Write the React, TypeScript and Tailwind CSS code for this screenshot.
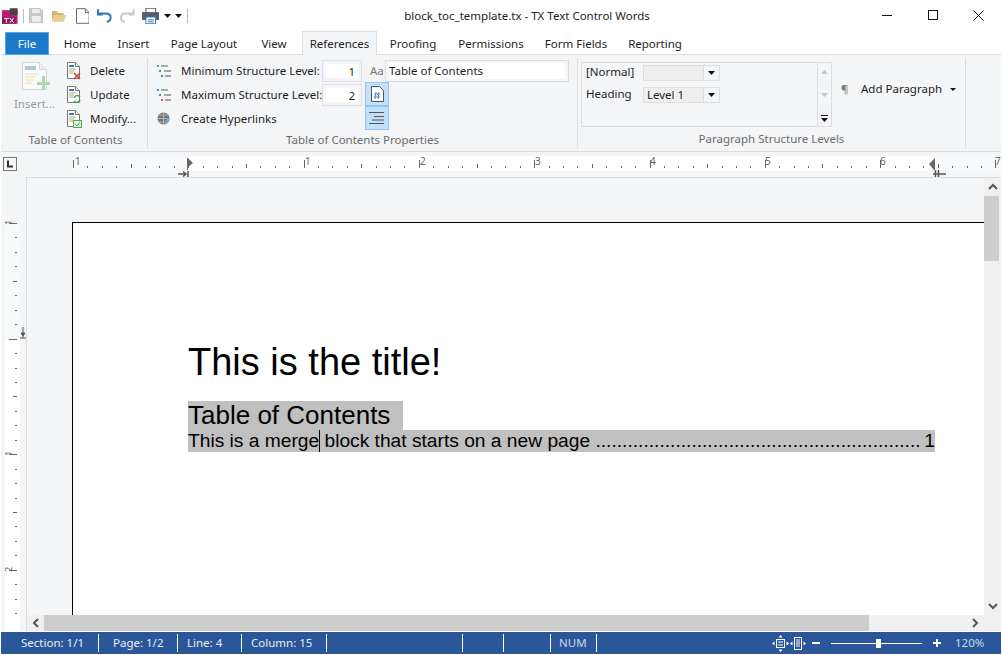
import React from "react";

const tabs = [
  { label: "Home", w: "w-[62px]" },
  { label: "Insert", w: "w-[45px]" },
  { label: "Page Layout", w: "w-[96px]" },
  { label: "View", w: "w-[44px]" },
];
const tabsAfter = [
  { label: "Proofing", w: "w-[72px]" },
  { label: "Permissions", w: "w-[84px]" },
  { label: "Form Fields", w: "w-[86px]" },
  { label: "Reporting", w: "w-[72px]" },
];

function DocBase({ children }: { children?: React.ReactNode }) {
  return (
    <svg width="16" height="18" viewBox="0 0 16 18" className="shrink-0">
      <path d="M1.5.5h8l4 4v12h-12z" fill="#fff" stroke="#777" />
      <path d="M9.5.5v4h4" fill="#eee" stroke="#777" />
      <rect x="3" y="3" width="5" height="2" fill="#3b78b8" />
      <path d="M3 7h7M3 9h5M3 11h4" stroke="#b9a67a" />
      {children}
    </svg>
  );
}

function LevelIcon({ colors }: { colors: string[] }) {
  return (
    <svg width="14" height="14" viewBox="0 0 14 14" className="shrink-0">
      <rect x="0" y="1" width="2" height="2" fill={colors[0]} />
      <path d="M4 2h7" stroke="#3c7a4c" />
      <rect x="2" y="6" width="2" height="2" fill={colors[1]} />
      <path d="M7 7h7" stroke="#555" />
      <rect x="4" y="11" width="2" height="2" fill={colors[2]} />
      <path d="M8 12h6" stroke="#555" />
    </svg>
  );
}

function Caret() {
  return (
    <svg width="7" height="4" viewBox="0 0 7 4" className="shrink-0">
      <path d="M0 0h7L3.5 4z" fill="#111" />
    </svg>
  );
}

function SmallAction({ label, icon }: { label: string; icon: React.ReactNode }) {
  return (
    <div className="flex h-6 items-center">
      {icon}
      <span className="ml-[8px] text-[#1e1e1e]">{label}</span>
    </div>
  );
}

function SpinBox({ value }: { value: string }) {
  return (
    <div className="h-[22px] w-[40px] border border-[#dcddee] bg-[#f4f5f7] p-[3px]">
      <div className="h-full bg-white pr-[3px] text-right leading-[15px] text-[#1e1e1e]">{value}</div>
    </div>
  );
}

function Combo({ value }: { value?: string }) {
  return (
    <div className="flex h-[16px] w-[77px] border border-[#dcdddf] bg-[#eeeeee]">
      <div className="flex-1 pl-[3px] leading-[14px] text-[#1e1e1e]">{value}</div>
      <div className="flex w-[16px] items-center justify-center border-l border-[#dcdddf] bg-[#f4f5f7]">
        <Caret />
      </div>
    </div>
  );
}

function HRuler() {
  const ticks: React.ReactNode[] = [];
  const unit = 115.3;
  for (let i = 0; i <= 64; i++) {
    const x = Math.round(73 + (unit / 8) * i);
    if (x > 1000) break;
    if (i % 8 === 0) ticks.push(<rect key={i} x={x} y={8} width={1} height={8} fill="#666" />);
    else if (i % 4 === 0) ticks.push(<rect key={i} x={x} y={12} width={1} height={4} fill="#666" />);
    else ticks.push(<rect key={i} x={x} y={14} width={1} height={2} fill="#666" />);
  }
  const nums = [
    [75, "1"],
    [305, "1"],
    [420, "2"],
    [535, "3"],
    [650, "4"],
    [765, "5"],
    [880, "6"],
    [995, "7"],
  ] as const;
  return (
    <svg width="1000" height="25" viewBox="1 0 1000 25" className="block">
      <rect x="73" y="4" width="115" height="15" fill="#f8f9fa" />
      <rect x="188" y="4" width="747" height="15" fill="#fff" />
      <rect x="935" y="4" width="67" height="15" fill="#f8f9fa" />
      <rect x="3.5" y="5.5" width="13" height="13" fill="#f4f5f7" stroke="#777" />
      <path d="M8 8.5v6h5" fill="none" stroke="#333" strokeWidth="2" />
      {ticks}
      {nums.map(([x, n], i) => (
        <text key={i} x={x} y={13} fontSize="10" fill="#666" fontFamily="Noto Sans, sans-serif">
          {n}
        </text>
      ))}
      <path d="M188 6l5 5-5 4v3h-1V6z" fill="#666" />
      <path d="M178 22h8M183 19.500l3 2.500-3 2.500M188 19v6" fill="none" stroke="#555" strokeWidth="1.500" />
      <path d="M935 6v12h-1l-5-6z" fill="#666" />
      <path d="M933 22h13M935.500 18v7M938.500 18v7" fill="none" stroke="#555" strokeWidth="1.500" />
    </svg>
  );
}

function VRuler() {
  const ticks: React.ReactNode[] = [];
  const top = 46;
  for (let i = 0; i <= 32; i++) {
    const y = Math.round(top + (115.6 / 8) * i);
    if (y > 450) break;
    if (i % 8 === 0) ticks.push(<rect key={i} x={9} y={y} width={8} height={1} fill="#666" />);
    else if (i % 4 === 0) ticks.push(<rect key={i} x={13} y={y} width={4} height={1} fill="#666" />);
    else ticks.push(<rect key={i} x={15} y={y} width={2} height={1} fill="#666" />);
  }
  return (
    <svg width="25" height="454" viewBox="1 0 25 454" className="block">
      <rect x="5" y="46" width="15" height="115" fill="#f8f9fa" />
      <rect x="5" y="161" width="15" height="293" fill="#fff" />
      {ticks}
      {[
        [48, "1"],
        [279, "1"],
        [395, "2"],
      ].map(([y, n]) => (
        <text
          key={y}
          x={0}
          y={0}
          transform={`translate(12 ${y}) rotate(-90)`}
          fontSize="9"
          fill="#666"
          fontFamily="Noto Sans, sans-serif"
        >
          {n}
        </text>
      ))}
      <path d="M23 150v11M20 161h6M21 156h4l-2 3z" fill="#555" stroke="#555" />
    </svg>
  );
}

function Arrow({ d }: { d: string }) {
  return (
    <svg width="10" height="10" viewBox="0 0 10 10">
      <path d={d} fill="none" stroke="#555" strokeWidth="2" />
    </svg>
  );
}

function Sep({ w }: { w: string }) {
  return (
    <div className={`flex h-full items-center justify-end ${w}`}>
      <div className="h-[18px] w-px bg-white" />
    </div>
  );
}

export default function App() {
  return (
    <div className="flex h-[655px] w-[1002px] flex-col overflow-hidden border-x border-b border-white bg-white font-['Noto_Sans','Open_Sans',sans-serif] text-[11.5px] whitespace-nowrap">
      {/* title bar */}
      <div className="flex h-[31px] shrink-0 items-center">
        <div className="flex w-[187px] items-center">
          <svg width="16" height="16" viewBox="0 0 16 16" className="ml-[1px]">
            <rect y="2" width="16" height="14" fill="#c2187a" />
            <rect x="8" width="8" height="7" fill="#444" />
            <rect x="0" y="9" width="14" height="7" fill="#8b1a5c" />
            <path d="M2 10.500h5M4.500 10.500V15M8 10l4 5M12 10l-4 5" stroke="#fff" />
          </svg>
          <div className="ml-[5px] h-[14px] w-px bg-[#bbb]" />
          <svg width="15" height="15" viewBox="0 0 15 15" className="ml-[5px]">
            <path d="M.5.5h11l3 3v11H.5z" fill="#c9c9c9" stroke="#bbb" />
            <rect x="3" y="1" width="8" height="4" fill="#eee" />
            <rect x="3" y="8" width="9" height="6" fill="#eee" />
          </svg>
          <svg width="15" height="13" viewBox="0 0 15 13" className="ml-[9px]">
            <path d="M0 2h5l1 2h6v2H3l-3 6z" fill="#d6b676" />
            <path d="M3 6h12l-3 7H0z" fill="#eccb8e" />
          </svg>
          <svg width="14" height="16" viewBox="0 0 14 16" className="ml-[9px]">
            <path d="M.5.5h9l4 4v11H.5z" fill="#fff" stroke="#666" />
            <path d="M9.500.5v4h4" fill="none" stroke="#666" />
          </svg>
          <svg width="15" height="15" viewBox="0 0 15 15" className="ml-[8px]">
            <path d="M1 5.500h8c7 0 6 8 1 8.500" fill="none" stroke="#2e75b6" strokeWidth="2" />
            <path d="M1 1v5.500h5" fill="none" stroke="#2e75b6" strokeWidth="2" />
          </svg>
          <svg width="15" height="15" viewBox="0 0 15 15" className="ml-[8px]">
            <path d="M14 5.500H6c-7 0-6 8-1 8.500" fill="none" stroke="#c9c9c9" strokeWidth="2" />
            <path d="M14 1v5.500H9" fill="none" stroke="#c9c9c9" strokeWidth="2" />
          </svg>
          <svg width="18" height="16" viewBox="0 0 18 16" className="ml-[7px]">
            <rect x="4" y="0" width="10" height="5" fill="#fff" stroke="#555" />
            <rect x="0" y="4" width="18" height="8" fill="#55606c" />
            <rect x="4" y="9" width="10" height="7" fill="#fff" stroke="#2e75b6" />
            <path d="M6 12h6M6 14h6" stroke="#2e75b6" />
          </svg>
          <div className="ml-[5px] flex items-center gap-[4px]">
            <Caret />
            <Caret />
          </div>
          <div className="ml-[5px] h-[14px] w-px bg-[#bbb]" />
        </div>
        <div className="w-[678px] text-center text-[#1e1e1e]">block_toc_template.tx - TX Text Control Words</div>
        <div className="flex w-[135px] items-center">
          <svg width="11" height="11" viewBox="0 0 11 11" className="ml-[16px]">
            <path d="M0 5.500h10" stroke="#111" />
          </svg>
          <svg width="11" height="11" viewBox="0 0 11 11" className="ml-[34px]">
            <rect x="1.500" y=".5" width="9" height="9" fill="none" stroke="#111" />
          </svg>
          <svg width="11" height="11" viewBox="0 0 11 11" className="ml-[35px]">
            <path d="M.5.5l10 10M10.500.5l-10 10" stroke="#111" />
          </svg>
        </div>
      </div>

      {/* tabs */}
      <div className="flex h-[24px] shrink-0 border-b border-[#dcdddf] pl-[4px]">
        <div className="mt-px h-[23px] w-[44px] border border-[#5fa3dc] bg-[#1979ca] text-center leading-[21px] text-white">
          File
        </div>
        {tabs.map((t) => (
          <div key={t.label} className={`${t.w} pt-[4px] text-center text-[#1e1e1e]`}>
            {t.label}
          </div>
        ))}
        <div className="ml-[6px] h-[24px] w-[75px] border-x border-t border-[#dcdddf] bg-[#f4f5f7] pt-[3px] text-center text-[#1e1e1e]">
          References
        </div>
        {tabsAfter.map((t) => (
          <div key={t.label} className={`${t.w} pt-[4px] text-center text-[#1e1e1e]`}>
            {t.label}
          </div>
        ))}
      </div>

      {/* ribbon */}
      <div className="flex h-[97px] shrink-0 border-b border-[#dcdddf] bg-[#f4f5f7] py-[3px]">
        <div className="flex w-[147px] flex-col border-r border-[#dcdddf]">
          <div className="flex h-[73px] pt-px">
            <div className="w-[65px] pt-[3px]">
              <svg width="28" height="30" viewBox="0 0 28 30" className="ml-[21px]">
                <path d="M.5.5h17l7 7v20H.5z" fill="#fafafa" stroke="#d4d4d4" />
                <path d="M17.500.5v7h7" fill="#eee" stroke="#d4d4d4" />
                <rect x="3" y="4" width="11" height="4" fill="#a9c7e4" />
                <path d="M3 12h14M3 15h11M3 18h9M3 21h7" stroke="#f0dca8" />
                <path d="M20 14h3v6h5v3h-5v5h-3v-5h-5v-3h5z" fill="#a6dcb0" />
              </svg>
              <div className="mt-[3px] pl-[2px] text-center text-[#9a9a9a]">Insert...</div>
            </div>
            <div>
              <SmallAction
                label="Delete"
                icon={
                  <DocBase>
                    <path d="M8 11l6 6M14 11l-6 6" stroke="#d0402f" strokeWidth="1.500" />
                  </DocBase>
                }
              />
              <SmallAction
                label="Update"
                icon={
                  <DocBase>
                    <path d="M8 12c1-3 4-3 6-1M14 14c-1 3-4 3-6 1" fill="none" stroke="#3fa34d" strokeWidth="1.500" />
                  </DocBase>
                }
              />
              <SmallAction
                label="Modify..."
                icon={
                  <DocBase>
                    <rect x="7.500" y="10.500" width="8" height="7" fill="#e8f6ea" stroke="#3fb04f" />
                    <path d="M9 14l2 2 3-4" fill="none" stroke="#3fb04f" />
                  </DocBase>
                }
              />
            </div>
          </div>
          <div className="pl-[3px] text-center leading-[18px] text-[#6b6b6b]">Table of Contents</div>
        </div>

        <div className="flex w-[430px] flex-col border-r border-[#dcdddf]">
          <div className="flex h-[73px] pl-[9px] pt-px">
            <div className="w-[208px]">
              <div className="flex h-6 items-center">
                <LevelIcon colors={["#4aa564", "#4a86c5", "#4a86c5"]} />
                <span className="ml-[10px] w-[141px] text-[#1e1e1e]">Minimum Structure Level:</span>
                <SpinBox value="1" />
              </div>
              <div className="flex h-6 items-center">
                <LevelIcon colors={["#4a86c5", "#4a86c5", "#d0583f"]} />
                <span className="ml-[10px] w-[141px] text-[#1e1e1e]">Maximum Structure Level:</span>
                <SpinBox value="2" />
              </div>
              <div className="flex h-6 items-center">
                <svg width="14" height="14" viewBox="0 0 14 14" className="shrink-0">
                  <circle cx="6.500" cy="6.500" r="6" fill="#777" />
                  <path d="M.5 6.500h12M6.500.5v12M2 3h9M2 10h9" stroke="#ccc" strokeWidth=".7" />
                  <path d="M8 11l4-4" stroke="#6ea4d8" strokeWidth="2.500" />
                </svg>
                <span className="ml-[10px] text-[#1e1e1e]">Create Hyperlinks</span>
              </div>
            </div>
            <div className="w-[204px]">
              <div className="flex h-[23px] items-center">
                <span className="ml-[5px] w-[15px] text-[#777]">Aa</span>
                <div className="h-[22px] w-[184px] border border-[#dcdddf] bg-[#f4f5f7] px-[3px] py-[2px]">
                  <div className="h-full bg-white leading-[16px] text-[#1e1e1e]">Table of Contents</div>
                </div>
              </div>
              <div className="flex h-[24px] w-[24px] items-center justify-center border border-[#90c5f5] bg-[#c3e0fa]">
                <svg width="13" height="16" viewBox="0 0 13 16">
                  <path d="M.5.5h8l4 4v11H.5z" fill="#fff" stroke="#555" />
                  <path d="M5 6l-1 7M8 6l-1 7M3 8h6M3 11h6" stroke="#2e75b6" strokeWidth=".8" />
                </svg>
              </div>
              <div className="flex h-[24px] w-[24px] items-center justify-center border border-[#90c5f5] bg-[#c3e0fa]">
                <svg width="16" height="12" viewBox="0 0 16 12">
                  <path d="M0 .5h15M5 4.500h10M3 8h12M0 11.500h15" stroke="#555" />
                </svg>
              </div>
            </div>
          </div>
          <div className="text-center leading-[18px] text-[#6b6b6b]">Table of Contents Properties</div>
        </div>

        <div className="flex w-[388px] flex-col border-r border-[#dcdddf]">
          <div className="flex h-[73px] items-start pl-[3px] pt-[4px]">
            <div className="flex h-[65px] w-[251px] border border-[#dcdddf]">
              <div className="w-[235px] pl-[4px] pt-[2px]">
                <div className="flex h-[22px] items-start">
                  <span className="w-[57px] leading-[14px] text-[#1e1e1e]">[Normal]</span>
                  <Combo />
                </div>
                <div className="flex h-[22px] items-start">
                  <span className="w-[57px] leading-[14px] text-[#1e1e1e]">Heading</span>
                  <Combo value="Level 1" />
                </div>
              </div>
              <div className="flex flex-1 flex-col items-center justify-between border-l border-[#dcdddf] pb-[4px] pt-[7px]">
                <svg width="7" height="4" viewBox="0 0 7 4">
                  <path d="M3.500 0L7 4H0z" fill="#c4c4c4" />
                </svg>
                <svg width="7" height="4" viewBox="0 0 7 4">
                  <path d="M0 0h7L3.500 4z" fill="#c4c4c4" />
                </svg>
                <svg width="7" height="7" viewBox="0 0 7 7">
                  <path d="M0 0h7v1H0zM0 3h7L3.500 7z" fill="#111" />
                </svg>
              </div>
            </div>
            <div className="flex h-[54px] items-center">
              <span className="ml-[9px] w-[20px] text-[#777]">¶</span>
              <span className="text-[#1e1e1e]">Add Paragraph</span>
              <span className="ml-[8px]">
                <svg width="6" height="3" viewBox="0 0 6 3" className="block">
                  <path d="M0 0h6L3 3z" fill="#111" />
                </svg>
              </span>
            </div>
          </div>
          <div className="text-center leading-[18px] text-[#6b6b6b]">Paragraph Structure Levels</div>
        </div>
      </div>

      {/* horizontal ruler */}
      <div className="h-[25px] shrink-0 bg-[#f4f5f7]">
        <HRuler />
      </div>

      {/* document */}
      <div className="flex min-h-0 flex-1 bg-[#f4f5f7]">
        <div className="w-[25px] shrink-0">
          <VRuler />
        </div>
        <div className="flex min-w-0 flex-1 flex-col border-l border-t border-[#dcdddf]">
          <div className="flex min-h-0 flex-1">
            <div className="min-w-0 flex-1 overflow-hidden pl-[45px] pt-[44px]">
              <div className="h-[500px] border-l border-t border-black bg-white pl-[115px] pt-[117px] font-['Liberation_Sans',Arial,sans-serif] text-black">
                <div className="text-[38px] leading-[44px]">This is the title!</div>
                <div className="mt-[17px] h-[29px] w-[215px] bg-[#c0c0c0] text-[26px] leading-[29px]">
                  Table of Contents
                </div>
                <div className="flex h-[22px] w-[747px] bg-[#c0c0c0] text-[19.2px] leading-[22px]">
                  <span className="shrink-0 whitespace-pre">This is a merge</span>
                  <span className="-mr-px h-[22px] w-px shrink-0 bg-black" />
                  <span className="shrink-0 whitespace-pre"> block that starts on a new page </span>
                  <span className="shrink-0">{".".repeat(61)}</span>
                  <span className="ml-auto shrink-0">1</span>
                </div>
              </div>
            </div>
            <div className="flex w-[17px] shrink-0 flex-col items-center bg-[#f0f0f0] pb-[4px] pt-[4px]">
              <Arrow d="M1 7l4-4 4 4" />
              <div className="mt-[4px] h-[65px] w-[15px] self-start bg-[#cdcdcd]" />
              <div className="flex-1" />
              <Arrow d="M1 3l4 4 4-4" />
            </div>
          </div>
          <div className="flex h-[16px] shrink-0 items-center bg-[#f0f0f0]">
            <div className="flex w-[17px] justify-center">
              <Arrow d="M7 1L3 5l4 4" />
            </div>
            <div className="h-full w-[825px] bg-[#cdcdcd]" />
            <div className="flex-1" />
            <div className="mr-[21px]">
              <Arrow d="M3 1l4 4-4 4" />
            </div>
          </div>
        </div>
      </div>

      {/* status bar */}
      <div className="mt-px flex h-[22px] shrink-0 items-center bg-[#2b579a] text-[#e8eef6]">
        <div className="flex h-full w-[98px] items-center">
          <span className="ml-[20px] flex-1">Section: 1/1</span>
          <div className="h-[18px] w-px bg-white" />
        </div>
        <div className="flex h-full w-[79px] items-center">
          <span className="ml-[14px] flex-1">Page: 1/2</span>
          <div className="h-[18px] w-px bg-white" />
        </div>
        <div className="flex h-full w-[64px] items-center">
          <span className="ml-[9px] flex-1">Line: 4</span>
          <div className="h-[18px] w-px bg-white" />
        </div>
        <div className="flex h-full w-[85px] items-center">
          <span className="ml-[9px] flex-1">Column: 15</span>
          <div className="h-[18px] w-px bg-white" />
        </div>
        <Sep w="w-[136px]" />
        <Sep w="w-[41px]" />
        <Sep w="w-[47px]" />
        <div className="flex h-full w-[46px] items-center">
          <span className="ml-[8px] flex-1 text-[#c9d9ee]">NUM</span>
          <div className="h-[18px] w-px bg-white" />
        </div>
        <div className="ml-[175px] flex items-center">
          <svg width="17" height="17" viewBox="0 0 17 17">
            <rect x="4.500" y="4.500" width="8" height="8" fill="none" stroke="#fff" />
            <path d="M6 7h5M6 10h5" stroke="#fff" />
            <path d="M8.500 0l2 2.500h-4zM8.500 17l2-2.500h-4zM0 8.500l2.500-2v4zM17 8.500l-2.500-2v4z" fill="#fff" />
          </svg>
          <svg width="16" height="13" viewBox="0 0 16 13" className="ml-px">
            <rect x="4.500" y=".5" width="7" height="12" fill="none" stroke="#fff" />
            <path d="M6 3h4M6 5h4M6 7h4M6 9h4" stroke="#fff" />
            <path d="M0 6.500l2.500-2v4zM16 6.500l-2.500-2v4z" fill="#fff" />
          </svg>
          <div className="ml-[6px] h-[2px] w-[8px] bg-white" />
          <div className="relative ml-[11px] h-px w-[91px] bg-white">
            <div className="absolute left-[45px] top-[-4px] h-[9px] w-[5px] bg-white" />
          </div>
          <svg width="8" height="8" viewBox="0 0 8 8" className="ml-[11px]">
            <path d="M0 4h8M4 0v8" stroke="#fff" strokeWidth="2" />
          </svg>
          <span className="ml-[14px] text-[#c9d9ee]">120%</span>
        </div>
      </div>
    </div>
  );
}
